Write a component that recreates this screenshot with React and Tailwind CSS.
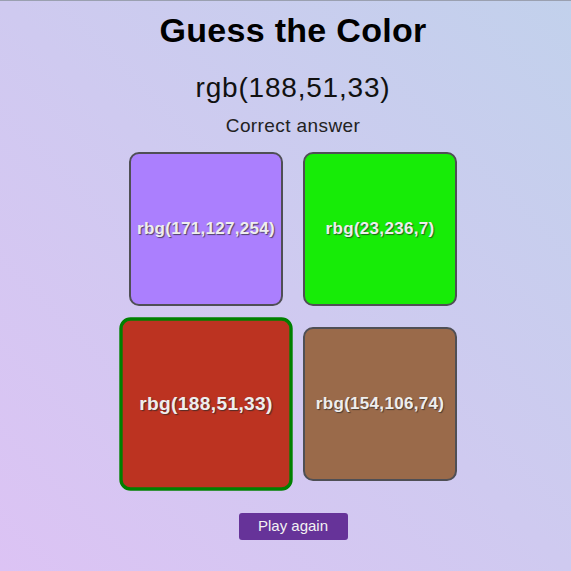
const options = [
  { r: 171, g: 127, b: 254 },
  { r: 23, g: 236, b: 7 },
  { r: 188, g: 51, b: 33 },
  { r: 154, g: 106, b: 74 },
];

const answer = options[2];

const Tile = ({ color, selected }) => {
  const label = `rbg(${color.r},${color.g},${color.b})`;
  return (
    <div
      className={
        "w-[154px] h-[154px] rounded-[10px] flex items-center justify-center " +
        (selected ? "border-[3.5px] border-[#008000] scale-[1.126]" : "border-2 border-[#4f4f55]")
      }
      style={{ backgroundColor: `rgb(${color.r},${color.g},${color.b})` }}
    >
      <span className="text-[17px] font-bold tracking-[0.3px] text-[#eeeeee] [text-shadow:1px_1px_1px_rgba(40,40,40,0.7)]">
        {label}
      </span>
    </div>
  );
};

export default function App() {
  return (
    <div className="w-[571px] h-[571px] overflow-hidden bg-[linear-gradient(to_top_right,#dcc3f4,#c2d1ec)] font-['Liberation_Sans',Arial,sans-serif]">
      <div className="h-px bg-[#9aa0b0]" />
      <div className="pl-[15px] flex flex-col items-center">
        <h1 className="mt-[9px] text-[34px] leading-[40px] font-bold tracking-[0.3px] text-black">
          Guess the Color
        </h1>
        <p className="mt-[21px] text-[28px] leading-[34px] tracking-[0.8px] text-[#111]">
          rgb({answer.r},{answer.g},{answer.b})
        </p>
        <p className="mt-[9px] text-[19px] leading-[24px] tracking-[0.4px] text-[#222]">
          Correct answer
        </p>
        <div className="mt-[14px] grid grid-cols-2 gap-x-[20px] gap-y-[21px]">
          {options.map((c, i) => (
            <Tile key={i} color={c} selected={i === 2} />
          ))}
        </div>
        <button className="mt-[32px] w-[109px] h-[27px] rounded-[3px] bg-[#663399] text-[15px] text-[#f2f2f2]">
          Play again
        </button>
      </div>
    </div>
  );
}
